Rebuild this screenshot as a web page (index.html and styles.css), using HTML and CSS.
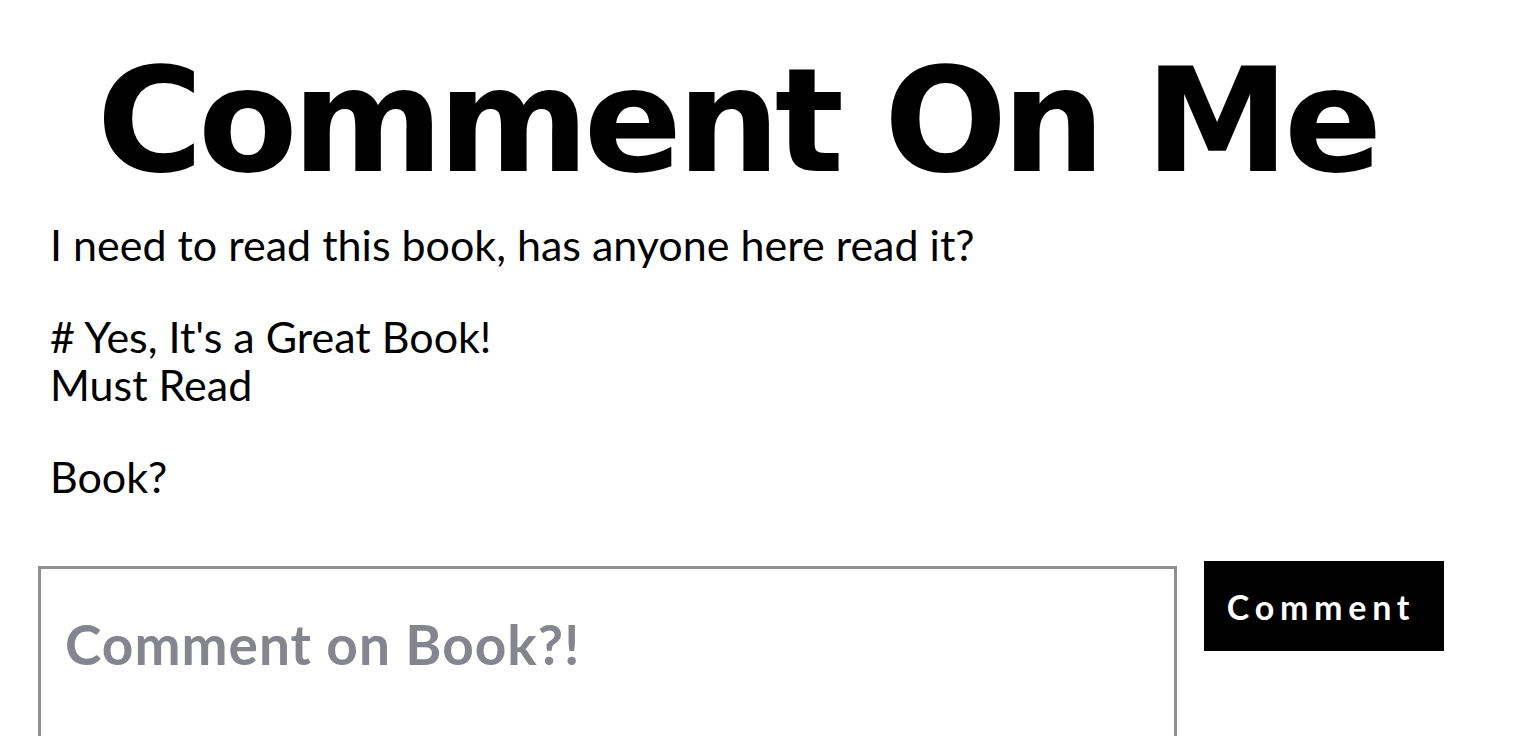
FILE: index.html
```html
<!DOCTYPE html>
<html>
<head>
<meta charset="utf-8">
<link rel="stylesheet" href="styles.css">
</head>
<body>
<main class="page">
  <h1 class="title">Comment On Me</h1>
  <section class="comments">
    <p class="comment">I need to read this book, has anyone here read it?</p>
    <p class="comment"># Yes, It's a Great Book!<br>Must Read</p>
    <p class="comment">Book?</p>
  </section>
  <form class="comment-form">
    <textarea class="comment-input" placeholder="Comment on Book?!"></textarea>
    <button type="button" class="comment-btn">Comment</button>
  </form>
</main>
</body>
</html>
```
FILE: styles.css
```css
html, body {
  margin: 0;
  padding: 0;
  background: #fff;
}
.page {
  font-family: "Lato", "Liberation Sans", sans-serif;
  color: #000;
}
.title {
  margin: 0;
  padding-top: 46px;
  padding-right: 60px;
  text-align: center;
  font-family: "DejaVu Sans", sans-serif;
  font-weight: 700;
  font-size: 145px;
  line-height: 150px;
  letter-spacing: -5.3px;
}
.comments {
  padding-left: 50px;
  margin-top: 25px;
}
.comment {
  margin: 0 0 44px 0;
  font-size: 43px;
  line-height: 48px;
}
.comment:last-child {
  margin-bottom: 0;
}
.comment-form {
  display: flex;
  align-items: flex-start;
  gap: 27px;
  padding-left: 38px;
  margin-top: 60px;
}
.comment-input {
  box-sizing: border-box;
  width: 1139px;
  height: 250px;
  margin-top: 5px;
  border: 3px solid #8f8f8f;
  padding: 42px 24px;
  font-family: "Lato", "Liberation Sans", sans-serif;
  font-weight: 700;
  font-size: 55px;
  letter-spacing: 1px;
  resize: none;
  outline: none;
}
.comment-input::placeholder {
  color: #85858e;
}
.comment-btn {
  width: 240px;
  height: 90px;
  background: #000;
  color: #fff;
  border: none;
  font-family: "Lato", "Liberation Sans", sans-serif;
  font-weight: 700;
  font-size: 34px;
  letter-spacing: 5.7px;
  padding: 0 6px 0 0;
}
```
